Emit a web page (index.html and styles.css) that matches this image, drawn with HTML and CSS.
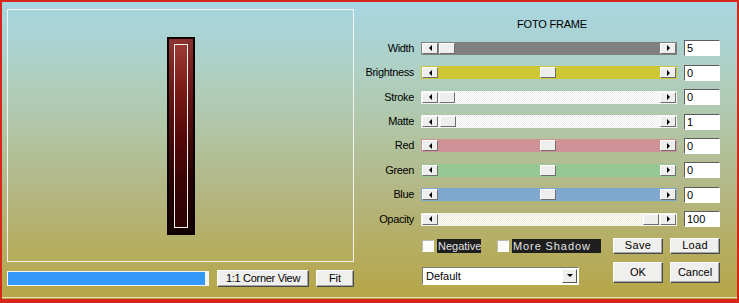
FILE: index.html
```html
<!DOCTYPE html>
<html>
<head>
<meta charset="utf-8">
<link rel="stylesheet" href="styles.css">
</head>
<body>
<div class="window">
  <div class="left">
    <div class="preview">
      <div class="frame"><div class="frame-inner"></div></div>
    </div>
    <div class="left-bar">
      <div class="progress"><div class="progress-fill"></div></div>
      <button class="btn btn-corner">1:1 Corner View</button>
      <button class="btn btn-fit">Fit</button>
    </div>
  </div>
  <div class="right">
    <div class="title">FOTO FRAME</div>
    <div class="sliders">
      <span class="label">Width</span>
      <div class="slider track-gray"><span class="arrow arrow-left"></span><span class="thumb" style="left:18px"></span><span class="arrow arrow-right"></span></div>
      <div class="field">5</div>

      <span class="label">Brightness</span>
      <div class="slider track-yellow"><span class="arrow arrow-left"></span><span class="thumb" style="left:119px"></span><span class="arrow arrow-right"></span></div>
      <div class="field">0</div>

      <span class="label">Stroke</span>
      <div class="slider track-white"><span class="arrow arrow-left"></span><span class="thumb" style="left:18px"></span><span class="arrow arrow-right"></span></div>
      <div class="field">0</div>

      <span class="label">Matte</span>
      <div class="slider track-white"><span class="arrow arrow-left"></span><span class="thumb" style="left:19px"></span><span class="arrow arrow-right"></span></div>
      <div class="field">1</div>

      <span class="label">Red</span>
      <div class="slider track-red"><span class="arrow arrow-left"></span><span class="thumb" style="left:119px"></span><span class="arrow arrow-right"></span></div>
      <div class="field">0</div>

      <span class="label">Green</span>
      <div class="slider track-green"><span class="arrow arrow-left"></span><span class="thumb" style="left:119px"></span><span class="arrow arrow-right"></span></div>
      <div class="field">0</div>

      <span class="label">Blue</span>
      <div class="slider track-blue"><span class="arrow arrow-left"></span><span class="thumb" style="left:119px"></span><span class="arrow arrow-right"></span></div>
      <div class="field">0</div>

      <span class="label">Opacity</span>
      <div class="slider track-cream"><span class="arrow arrow-left"></span><span class="thumb" style="left:222px"></span><span class="arrow arrow-right"></span></div>
      <div class="field">100</div>
    </div>
    <div class="bottom">
      <div class="checks">
        <span class="check-box"></span><span class="check-label check-negative">Negative</span>
        <span class="check-box check-second"></span><span class="check-label check-shadow">More Shadow</span>
      </div>
      <button class="btn btn-small">Save</button>
      <button class="btn btn-small">Load</button>
      <div class="dropdown"><span class="dropdown-text">Default</span><span class="dropdown-arrow"></span></div>
      <button class="btn btn-big">OK</button>
      <button class="btn btn-big">Cancel</button>
    </div>
  </div>
</div>
</body>
</html>
```

FILE: styles.css
```css
* { box-sizing: border-box; }

body {
  margin: 0;
  font-family: "Liberation Sans", Arial, sans-serif;
  font-size: 11px;
  color: #000;
}

.window {
  width: 739px;
  height: 303px;
  display: flex;
  border: 2px solid #d8261d;
  border-bottom-width: 4px;
  background: linear-gradient(to bottom, #a7d6e2 0%, #aed0c6 22%, #b1c6a6 42%, #b3b98a 60%, #b5ad62 82%, #b6a646 100%);
  box-shadow: inset 0 -1px 0 #b3a446, inset 0 -2px 0 #e6dfb6;
}

/* ---------- left column ---------- */
.left {
  width: 352px;
  padding: 7px 0 0 5px;
}

.preview {
  width: 347px;
  height: 253px;
  border: 1px solid #f2f2f0;
  display: flex;
  align-items: center;
  justify-content: center;
}

.frame {
  width: 28px;
  height: 198px;
  border: 2px solid #0c0101;
  background: linear-gradient(165deg, #8e3430 0%, #5a1210 35%, #2a0303 70%, #120000 100%);
  display: flex;
  align-items: center;
  justify-content: center;
}

.frame-inner {
  width: 14px;
  height: 184px;
  border: 1px solid #f6f0f0;
  background: linear-gradient(to bottom, #9c3a34 0%, #7a1a16 25%, #560909 50%, #3a0404 75%, #2c0202 100%);
}

.left-bar {
  display: flex;
  align-items: flex-start;
  margin-top: 8px;
}

.progress {
  width: 202px;
  height: 15px;
  margin-top: 1px;
  padding: 1px 4px 1px 1px;
  background: #f6f6f4;
}

.progress-fill {
  width: 100%;
  height: 100%;
  background: #3399fb;
}

.btn {
  font-family: "Liberation Sans", Arial, sans-serif;
  font-size: 11px;
  color: #000;
  background: #efefed;
  border: 1px solid;
  border-color: #ffffff #4a4a4a #4a4a4a #ffffff;
  box-shadow: inset -1px -1px 0 #a5a5a5;
  padding: 0;
  margin: 0;
  line-height: 1;
}

.btn-corner {
  width: 92px;
  height: 17px;
  margin-left: 8px;
  letter-spacing: -0.3px;
}

.btn-fit {
  width: 38px;
  height: 17px;
  margin-left: 7px;
}

/* ---------- right column ---------- */
.right {
  width: 383px;
}

.title {
  margin-top: 16px;
  line-height: 13px;
  text-align: center;
  padding-left: 13px;
  letter-spacing: -0.2px;
}

.sliders {
  margin-top: 5.2px;
  display: grid;
  grid-template-columns: 60px 256px 36px;
  column-gap: 7px;
  grid-auto-rows: 24.4px;
  align-items: center;
}

.label {
  text-align: right;
  line-height: 13px;
  letter-spacing: -0.35px;
}

.slider {
  position: relative;
  height: 13px;
  padding: 0 1px;
  display: flex;
  justify-content: space-between;
  align-items: center;
}

.track-gray { background: #808080; }
.track-yellow { background: #cdc734; }
.track-white { background: repeating-conic-gradient(#ffffff 0 25%, #ebebeb 0 50%) 0 0 / 2px 2px; }
.track-red { background: #cf9297; }
.track-green { background: #95c895; }
.track-blue { background: #7fa8cf; }
.track-cream { background: repeating-conic-gradient(#fbfbf2 0 25%, #ecece0 0 50%) 0 0 / 2px 2px; }

.arrow,
.thumb {
  width: 16px;
  height: 11px;
  background: #eeeeec;
  border: 1px solid;
  border-color: #ffffff #6e6e6e #6e6e6e #ffffff;
}

.arrow {
  display: flex;
  align-items: center;
  justify-content: center;
}

.arrow::before {
  content: "";
  border-top: 3px solid transparent;
  border-bottom: 3px solid transparent;
}

.arrow-left::before { border-right: 3px solid #000; }
.arrow-right::before { border-left: 3px solid #000; }

.thumb {
  position: absolute;
  top: 1px;
}

.field {
  height: 16px;
  background: #fff;
  border: 1px solid;
  border-color: #5c5c5c #ffffff #ffffff #5c5c5c;
  padding-left: 2px;
  line-height: 14px;
}

/* ---------- bottom controls ---------- */
.bottom {
  margin-top: 6.6px;
  padding-left: 68px;
  display: grid;
  grid-template-columns: 184px 50px 50px;
  column-gap: 7px;
  row-gap: 8px;
  align-items: start;
}

.checks {
  display: flex;
  align-items: center;
  height: 16px;
}

.check-box {
  width: 12px;
  height: 12px;
  background: #fbfbf8;
  border: 1px solid;
  border-color: #b9b9b0 #ffffff #ffffff #b9b9b0;
}

.check-second { margin-left: 16px; }

.check-label {
  margin-left: 3px;
  height: 14px;
  line-height: 14px;
  background: #1e1e1e;
  color: #e4e4e4;
  padding-left: 1px;
  white-space: nowrap;
  overflow: hidden;
}

.check-negative { width: 44px; }
.check-shadow {
  width: 89px;
  letter-spacing: 0.9px;
}

.btn-small { height: 16px; letter-spacing: 0.3px; }
.btn-big { height: 21px; }

.dropdown {
  margin-top: 5px;
  width: 157px;
  height: 18px;
  background: #fff;
  border: 1px solid;
  border-color: #7a7a7a #ffffff #ffffff #7a7a7a;
  display: flex;
  align-items: center;
  justify-content: space-between;
  padding: 0 1px 0 3px;
}

.dropdown-text { line-height: 14px; }

.dropdown-arrow {
  width: 15px;
  height: 14px;
  background: #eeeeec;
  border: 1px solid;
  border-color: #ffffff #555555 #555555 #ffffff;
  display: flex;
  align-items: center;
  justify-content: center;
}

.dropdown-arrow::before {
  content: "";
  border-left: 3px solid transparent;
  border-right: 3px solid transparent;
  border-top: 3px solid #000;
}
```
